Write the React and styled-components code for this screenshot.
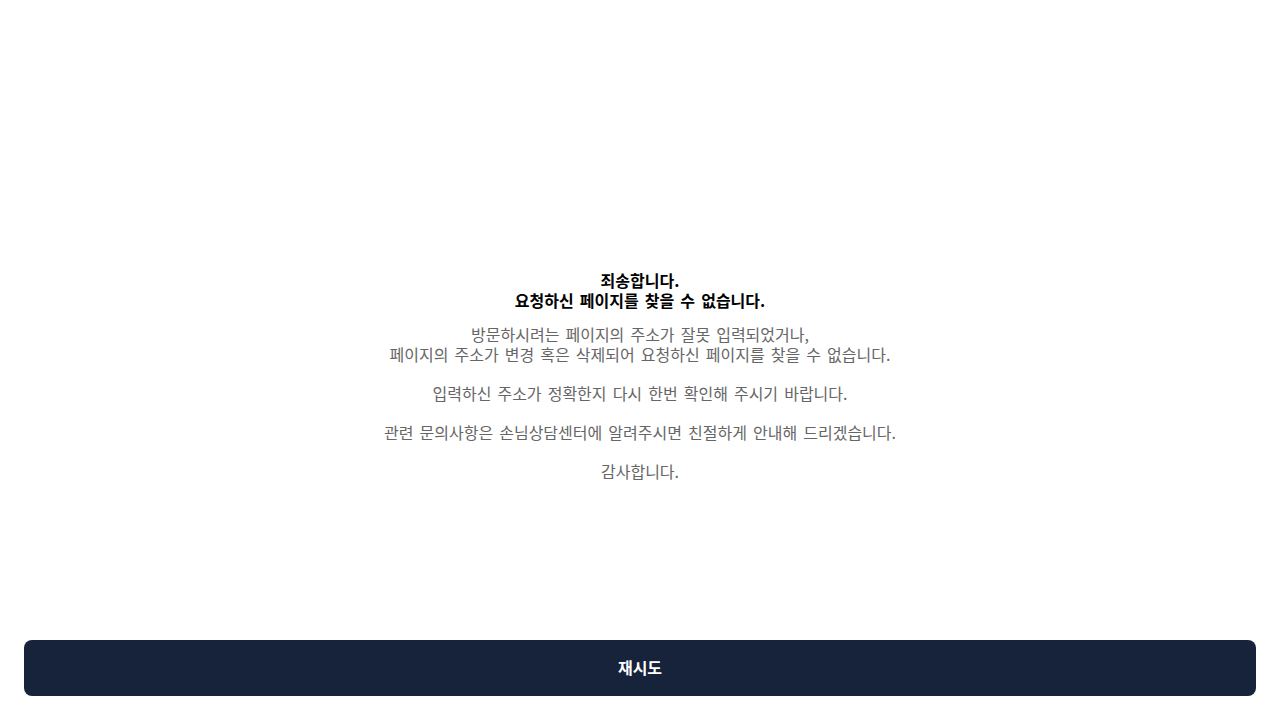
import { createGlobalStyle, styled } from 'styled-components';

function App() {
  return (
    <Page>
      <GlobalStyle />
      <Content>
        <Title>
          죄송합니다.
          <br />
          요청하신 페이지를 찾을 수 없습니다.
        </Title>
        <Message>
          방문하시려는 페이지의 주소가 잘못 입력되었거나,
          <br />
          페이지의 주소가 변경 혹은 삭제되어 요청하신 페이지를 찾을 수 없습니다.
          <br />
          <br />
          입력하신 주소가 정확한지 다시 한번 확인해 주시기 바랍니다.
          <br />
          <br />
          관련 문의사항은 손님상담센터에 알려주시면 친절하게 안내해 드리겠습니다.
          <br />
          <br />
          감사합니다.
        </Message>
      </Content>
      <Footer>
        <RetryButton type="button">재시도</RetryButton>
      </Footer>
    </Page>
  );
}

const GlobalStyle = createGlobalStyle`
  * {
    margin: 0;
    padding: 0;
    box-sizing: border-box;
  }

  body {
    background: #ffffff;
    font-family: "Noto Sans CJK KR", "Noto Sans", sans-serif;
  }
`;

const Page = styled.div`
  width: 100vw;
  height: 100vh;
  display: flex;
  flex-direction: column;
  overflow: hidden;
`;

const Content = styled.main`
  flex: 1;
  display: flex;
  flex-direction: column;
  align-items: center;
  justify-content: center;
  padding-top: 112px;
  text-align: center;
  font-size: 16px;
  line-height: 19.5px;
  word-spacing: 2.5px;
`;

const Title = styled.h1`
  font-size: inherit;
  font-weight: 700;
  color: #000000;
`;

const Message = styled.p`
  margin-top: 15px;
  color: #666666;
`;

const Footer = styled.div`
  padding: 0 24px 24px;
`;

const RetryButton = styled.button`
  width: 100%;
  height: 56px;
  padding-bottom: 3px;
  border: none;
  border-radius: 8px;
  background: #17223b;
  color: #ffffff;
  font-family: inherit;
  font-size: 16px;
  font-weight: 700;
  cursor: pointer;
`;

export default App;
